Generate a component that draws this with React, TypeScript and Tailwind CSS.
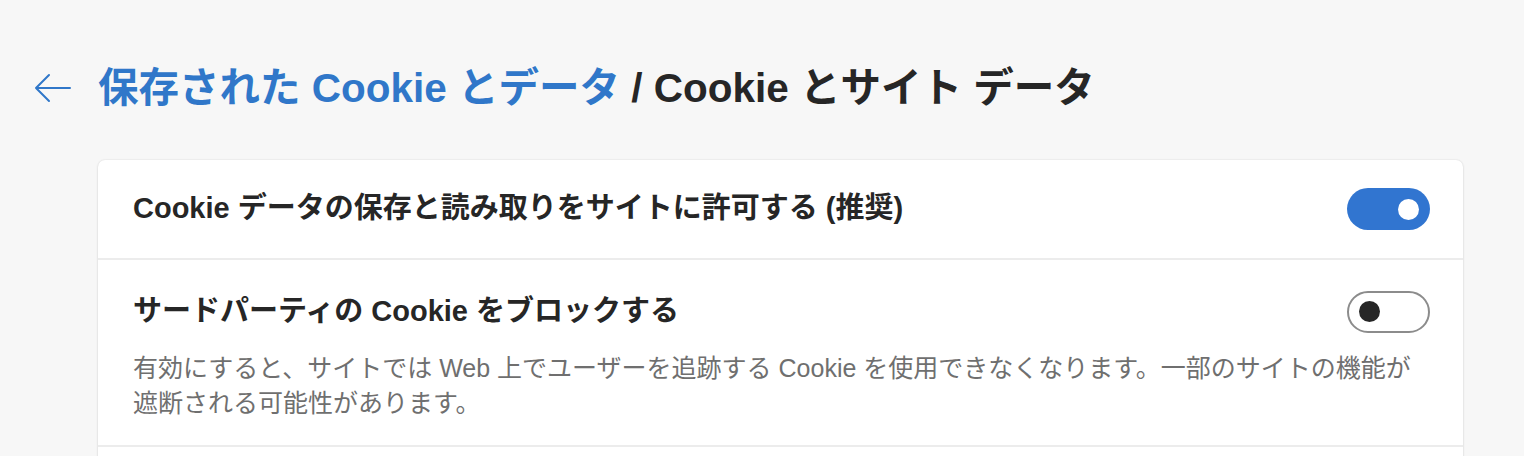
import React from "react";

const font = "font-['Liberation_Sans','Noto_Sans_CJK_JP',sans-serif]";

function Toggle({ on }: { on: boolean }) {
  return on ? (
    <div className="flex h-[42px] w-[83px] shrink-0 items-center justify-end rounded-full bg-[#3175d0] pr-[11px]">
      <div className="h-[21px] w-[21px] rounded-full bg-white" />
    </div>
  ) : (
    <div className="flex h-[42px] w-[83px] shrink-0 items-center rounded-full border-2 border-[#8c8c8c] bg-white pl-[10px]">
      <div className="h-[21px] w-[21px] rounded-full bg-[#262626]" />
    </div>
  );
}

export default function App() {
  return (
    <div className={`min-h-[456px] w-full overflow-hidden bg-[#f7f7f7] ${font}`}>
      <div className="flex items-center pl-[34px] pt-[62px]">
        <svg width="38" height="30" viewBox="0 0 38 30" className="mr-[26px] shrink-0">
          <path d="M2 15 H36 M15 2 L2 15 L15 28" fill="none" stroke="#3077c9" strokeWidth="2" strokeLinecap="round" strokeLinejoin="round" />
        </svg>
        <h1 className="text-[40.5px] font-bold leading-[52px] text-[#262626]">
          <span className="text-[#3077c9]">保存された Cookie とデータ</span> / Cookie とサイト データ
        </h1>
      </div>

      <div className="ml-[98px] mr-[61px] mt-[46px] rounded-[7px] bg-white shadow-[0_0_2px_rgba(0,0,0,0.12),0_1px_3px_rgba(0,0,0,0.08)]">
        <div className="flex h-[100px] items-center justify-between border-b-2 border-[#ececec] pl-[35px] pr-[33px]">
          <span className="text-[29px] font-bold text-[#262626]">
            Cookie データの保存と読み取りをサイトに許可する (推奨)
          </span>
          <Toggle on />
        </div>
        <div className="border-b-2 border-[#ececec] pb-[24px] pl-[35px] pr-[33px] pt-[30px]">
          <div className="flex items-center justify-between">
            <span className="text-[29px] font-bold text-[#262626]">
              サードパーティの Cookie をブロックする
            </span>
            <Toggle on={false} />
          </div>
          <p className="mt-[17px] max-w-[1290px] text-[25px] leading-[35px] text-[#6f6f6f]">
            有効にすると、サイトでは Web 上でユーザーを追跡する Cookie を使用できなくなります。一部のサイトの機能が遮断される可能性があります。
          </p>
        </div>
        <div className="h-[20px]" />
      </div>
    </div>
  );
}
